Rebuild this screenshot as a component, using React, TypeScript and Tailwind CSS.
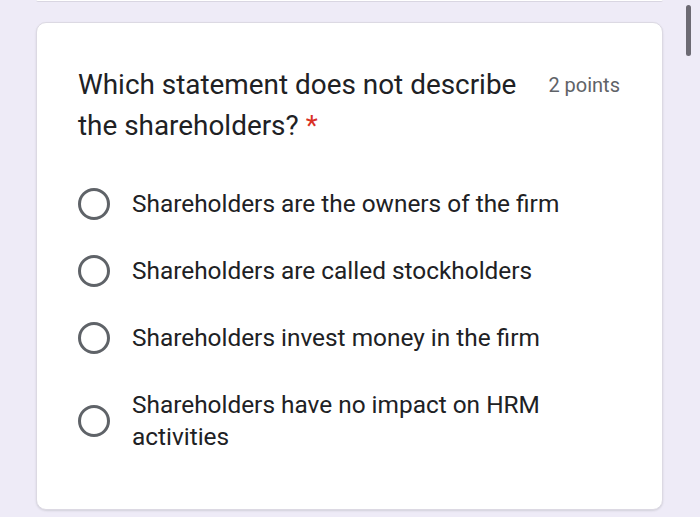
import React from "react";

const OPTIONS = [
  "Shareholders are the owners of the firm",
  "Shareholders are called stockholders",
  "Shareholders invest money in the firm",
  "Shareholders have no impact on HRM activities",
];

export default function App() {
  return (
    <div
      className="relative h-[517px] w-[700px] overflow-hidden bg-[#eeebf7]"
      style={{ fontFamily: "Roboto, 'Liberation Sans', sans-serif" }}
    >
      {/* bottom edge of previous card */}
      <div className="mx-[36px] h-[2px] w-[627px] rounded-b-lg border-b border-[#d9d6e2] bg-white" />

      {/* scrollbar */}
      <div className="absolute right-[9px] top-[5px] h-[51px] w-[5px] rounded-full bg-[#6c6a73]" />

      <div className="mt-[20px] ml-[36px] w-[627px] rounded-[10px] border border-[#dcd9e3] bg-white pt-[41px] pr-[42px] pb-[56px] pl-[41px] shadow-[0_1px_2px_rgba(60,64,67,0.15)]">
        <div className="flex items-start gap-[22px]">
          <div className="flex-1 text-[27.9px] leading-[41px] text-[#202124]">
            Which statement does not describe the shareholders?{" "}
            <span className="text-[#d93025]">*</span>
          </div>
          <div className="pt-[1px] text-[20px] leading-[41px] text-[#5f6368]">2 points</div>
        </div>

        <div className="mt-[42px] flex flex-col gap-[35px]">
          {OPTIONS.map((o) => (
            <div key={o} className="flex items-center gap-[22px]">
              <div className="h-[32px] w-[32px] shrink-0 rounded-full border-[3px] border-[#5f6368]" />
              <div className="max-w-[445px] text-[24.4px] leading-[32px] text-[#202124]">{o}</div>
            </div>
          ))}
        </div>
      </div>
    </div>
  );
}
